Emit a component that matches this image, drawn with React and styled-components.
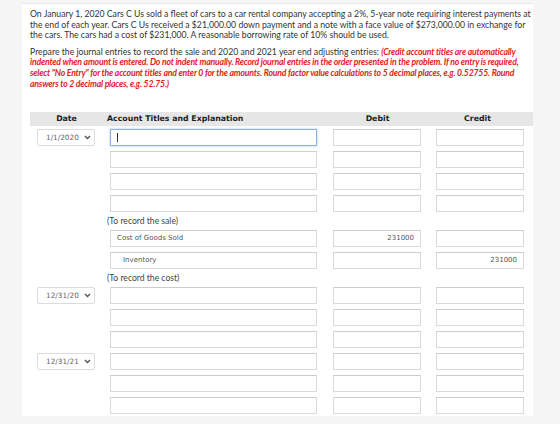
import React from 'react';
import styled, { createGlobalStyle, css } from 'styled-components';

const Global = createGlobalStyle`
  html, body { margin: 0; padding: 0; background: #f5f5f5; }
  body { width: 560px; height: 424px; overflow: hidden; }
`;

const Page = styled.div`
  width: 560px;
  height: 424px;
  display: flex;
  flex-direction: column;
  background: #f5f5f5;
`;

const Panel = styled.div`
  margin: 3px 0 0 22px;
  width: 511px;
  height: 413px;
  box-sizing: border-box;
  background: #fff;
  border-top: 1px solid #e9e9e9;
  padding: 5px 0 0 8px;
  font-family: Lato, "Open Sans", sans-serif;
  color: #333;
  overflow: hidden;
`;

const Para = styled.p`
  margin: ${(p) => (p.$gap ? '5.6px' : '0')} 0 0 0;
  width: 500px;
  font-size: 8.7px;
  line-height: 10.7px;
`;

const Line = styled.span`
  display: block;
  white-space: nowrap;
`;

const Warn = styled.span`
  color: #e3211c;
  font-weight: 700;
  font-style: italic;
  letter-spacing: -0.19px;
`;

const cols = css`
  display: grid;
  grid-template-columns: 73px 223px 103px 97px;
`;

const Header = styled.div`
  ${cols};
  margin-top: 22px;
  height: 14px;
  align-items: center;
  background: #e6e6e6;
  font-family: "DejaVu Sans", Verdana, sans-serif;
  font-weight: 700;
  font-size: 7.8px;
  color: #1e1e1e;
`;

const HeadCell = styled.div`
  text-align: ${(p) => (p.$left ? 'left' : 'center')};
  padding-left: ${(p) => (p.$left ? '4px' : '0')};
`;

const Body = styled.div`
  ${cols};
  row-gap: 5px;
  margin-top: 3px;
  align-items: start;
`;

const Cell = styled.div`
  padding-left: 7px;
  grid-column: ${(p) => p.$col};
`;

const Select = styled.div`
  width: 58px;
  height: 17px;
  box-sizing: border-box;
  border: 1px solid #dcdcdc;
  border-radius: 2px;
  background: #fff;
  display: flex;
  align-items: center;
  justify-content: space-between;
  padding: 0 3px 0 8px;
  font-family: "DejaVu Sans", Verdana, sans-serif;
  font-size: 7.3px;
  color: #666;
`;

const Field = styled.div`
  width: ${(p) => p.$w}px;
  height: 17px;
  box-sizing: border-box;
  border: 1px solid #d9d9d9;
  border-top-color: #cdcdcd;
  background: #fff;
  display: flex;
  align-items: center;
  justify-content: ${(p) => (p.$right ? 'flex-end' : 'flex-start')};
  padding: 0 6px 0 ${(p) => (p.$indent ? '12px' : '6px')};
  font-family: "DejaVu Sans", Verdana, sans-serif;
  font-size: 7px;
  color: #555;
  ${(p) =>
    p.$focus &&
    css`
      border-color: #8db3e2;
      box-shadow: 0 0 2px rgba(90, 145, 220, 0.55);
    `}
`;

const Caret = styled.span`
  width: 1px;
  height: 9px;
  background: #333;
`;

const Note = styled.div`
  grid-column: 2 / 5;
  padding-left: 4px;
  font-family: Lato, sans-serif;
  font-size: 8.6px;
  line-height: 8px;
  color: #444;
`;

const Chevron = () => (
  <svg width="7" height="5" viewBox="0 0 7 5">
    <path d="M1 1 L3.5 3.5 L6 1" fill="none" stroke="#555" strokeWidth="1.4" />
  </svg>
);

const DateSelect = ({ value }) => (
  <Select>
    <span>{value}</span>
    <Chevron />
  </Select>
);

const Row = ({ date, account, debit, credit, focus, indent }) => (
  <>
    <Cell $col="1">{date && <DateSelect value={date} />}</Cell>
    <Cell $col="2">
      <Field $w={207} $focus={focus} $indent={indent}>
        {focus ? <Caret /> : account}
      </Field>
    </Cell>
    <Cell $col="3">
      <Field $w={88} $right>{debit}</Field>
    </Cell>
    <Cell $col="4">
      <Field $w={88} $right>{credit}</Field>
    </Cell>
  </>
);

export default function App() {
  return (
    <Page>
      <Global />
      <Panel>
        <Para>
          <Line>On January 1, 2020 Cars C Us sold a fleet of cars to a car rental company accepting a 2%, 5-year note requiring interest payments at</Line>
          <Line>the end of each year. Cars C Us received a $21,000.00 down payment and a note with a face value of $273,000.00 in exchange for</Line>
          <Line>the cars. The cars had a cost of $231,000. A reasonable borrowing rate of 10% should be used.</Line>
        </Para>
        <Para $gap>
          <Line>
            Prepare the journal entries to record the sale and 2020 and 2021 year end adjusting entries:{' '}
            <Warn>(Credit account titles are automatically</Warn>
          </Line>
          <Line>
            <Warn>indented when amount is entered. Do not indent manually. Record journal entries in the order presented in the problem. If no entry is required,</Warn>
          </Line>
          <Line>
            <Warn>select "No Entry" for the account titles and enter 0 for the amounts. Round factor value calculations to 5 decimal places, e.g. 0.52755. Round</Warn>
          </Line>
          <Line>
            <Warn>answers to 2 decimal places, e.g. 52.75.)</Warn>
          </Line>
        </Para>
        <Header>
          <HeadCell>Date</HeadCell>
          <HeadCell $left>Account Titles and Explanation</HeadCell>
          <HeadCell>Debit</HeadCell>
          <HeadCell>Credit</HeadCell>
        </Header>
        <Body>
          <Row date="1/1/2020" focus />
          <Row />
          <Row />
          <Row />
          <Note>(To record the sale)</Note>
          <Row account="Cost of Goods Sold" debit="231000" />
          <Row account="Inventory" indent credit="231000" />
          <Note>(To record the cost)</Note>
          <Row date="12/31/20" />
          <Row />
          <Row />
          <Row date="12/31/21" />
          <Row />
          <Row />
        </Body>
      </Panel>
    </Page>
  );
}
